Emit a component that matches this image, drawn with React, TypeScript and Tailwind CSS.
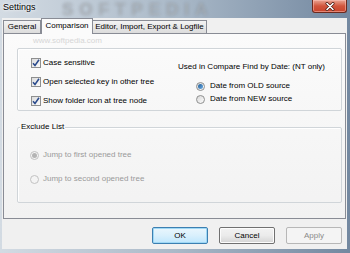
import React from 'react';

const Check = () => (
  <span className="w-[10px] h-[10px] border border-[#8e8f8f] bg-gradient-to-br from-[#dcdcdc] to-[#fbfbfb] flex items-center justify-center shrink-0">
    <svg width="8" height="8" viewBox="0 0 8 8">
      <path d="M1 4.2 L3 6.5 L7 0.8" fill="none" stroke="#2a4a8c" strokeWidth="1.5" />
    </svg>
  </span>
);

const Radio = ({ on, disabled }: { on?: boolean; disabled?: boolean }) => (
  <span
    className={
      'w-[9px] h-[9px] rounded-full border flex items-center justify-center shrink-0 ' +
      (disabled
        ? 'border-[#c2c2c2] bg-[#f4f4f4]'
        : 'border-[#8e8f8f] bg-gradient-to-br from-[#d8d8d8] to-[#fdfdfd]')
    }
  >
    {on && (
      <span
        className={
          'w-[5px] h-[5px] rounded-full ' +
          (disabled ? 'bg-[#b4b4b4]' : 'bg-gradient-to-br from-[#1d5a92] to-[#6fb0e8]')
        }
      />
    )}
  </span>
);

const Button = ({ label, kind }: { label: string; kind: 'default' | 'normal' | 'disabled' }) => {
  const cls =
    kind === 'default'
      ? 'border-[#3c7fb1] bg-gradient-to-b from-[#eaf6fd] via-[#d9f0fc] to-[#bee6fd] text-black shadow-[inset_0_0_0_1px_#9fd8f5]'
      : kind === 'normal'
      ? 'border-[#707070] bg-gradient-to-b from-[#f2f2f2] via-[#ebebeb] to-[#d4d4d4] text-black shadow-[inset_0_0_0_1px_#fcfcfc]'
      : 'border-[#b7b7b7] bg-[#f4f4f4] text-[#8a8a8a]';
  return (
    <div className={'w-[56px] h-[17px] rounded-[2px] border flex items-center justify-center text-[8px] ' + cls}>
      {label}
    </div>
  );
};

export default function App() {
  return (
    <div className="w-[350px] h-[253px] relative overflow-hidden flex flex-col bg-gradient-to-r from-[#d3dbe3] via-[#aab9c8] to-[#7388a0] font-['Liberation_Sans',Arial,sans-serif] leading-none select-none">
      {/* title bar */}
      <div className="h-[18px] flex items-start justify-between shrink-0">
        <span className="pl-[3px] pt-[3px] text-[9px] text-black [text-shadow:0_0_4px_#fff,0_0_2px_#fff]">Settings</span>
        <div className="mr-[3px] w-[35px] h-[13px] rounded-b-[3px] border border-t-0 border-[#6e2a1e] bg-gradient-to-b from-[#e9a493] via-[#d1553c] to-[#c8432b] flex items-center justify-center shadow-[inset_0_0_0_1px_rgba(255,200,190,0.5)]">
          <svg width="10" height="9" viewBox="0 0 10 9">
            <path d="M2 1.5 L8 7.5 M8 1.5 L2 7.5" stroke="#4a1a12" strokeWidth="3" strokeLinecap="round" />
            <path d="M2 1.5 L8 7.5 M8 1.5 L2 7.5" stroke="#ffffff" strokeWidth="1.6" strokeLinecap="round" />
          </svg>
        </div>
      </div>
      <span className="absolute left-[62px] top-[1px] text-[17px] font-bold tracking-[6px] text-white/30 blur-[1.2px] [text-shadow:0_0_2px_rgba(60,70,80,0.5)] pointer-events-none">
        SOFTPEDIA
      </span>

      {/* client area */}
      <div className="flex-1 ml-[2px] mr-[3px] mb-[4px] bg-[#f0f0f0] flex flex-col text-black">
        {/* tabs */}
        <div className="ml-[1px] h-[15px] flex items-end shrink-0">
          <div className="h-[13px] w-[38px] border border-b-0 border-[#898c95] bg-gradient-to-b from-[#f3f3f3] to-[#dcdcdc] flex items-center justify-center text-[8px]">
            General
          </div>
          <div className="relative z-10 -mb-px h-[16px] w-[52px] border border-b-0 border-[#898c95] bg-[#fbfbfb] flex items-start pt-[3px] justify-center text-[8px]">
            Comparison
          </div>
          <div className="h-[13px] w-[114px] border border-b-0 border-l-0 border-[#898c95] bg-gradient-to-b from-[#f3f3f3] to-[#dcdcdc] flex items-center justify-center text-[8px]">
            Editor, Import, Export &amp; Logfile
          </div>
        </div>

        {/* panel */}
        <div className="relative mx-[1px] h-[186px] shrink-0 border border-[#898c95] bg-gradient-to-b from-[#fbfbfb] to-[#f2f2f2] flex flex-col">
          <span className="absolute left-[29px] top-[3px] text-[8px] text-[#d6d6d6] pointer-events-none">www.softpedia.com</span>

          {/* group 1 */}
          <div className="mt-[14px] ml-[13px] mr-[3px] h-[63px] border border-[#d0d5d9] rounded-[2px] shadow-[inset_1px_1px_0_#fff] flex text-[8px]">
            <div className="w-[160px] pl-[13px] pt-[9px] flex flex-col gap-[9px]">
              <div className="h-[10px] flex items-center gap-[2px]"><Check /><span>Case sensitive</span></div>
              <div className="h-[10px] flex items-center gap-[2px]"><Check /><span>Open selected key in other tree</span></div>
              <div className="h-[10px] flex items-center gap-[2px]"><Check /><span>Show folder icon at tree node</span></div>
            </div>
            <div className="flex-1 pt-[13px] flex flex-col">
              <div className="h-[10px] flex items-center">Used in Compare Find by Date: (NT only)</div>
              <div className="mt-[9px] pl-[18px] flex flex-col gap-[3px]">
                <div className="h-[10px] flex items-center gap-[5px]"><Radio on /><span>Date from OLD source</span></div>
                <div className="h-[10px] flex items-center gap-[5px]"><Radio /><span>Date from NEW source</span></div>
              </div>
            </div>
          </div>

          {/* group 2 */}
          <div className="relative mt-[16px] ml-[13px] mr-[3px] h-[76px] border border-[#d0d5d9] rounded-[2px] shadow-[inset_1px_1px_0_#fff] text-[8px] flex flex-col pl-[12px] pt-[22px] gap-[14px]">
            <span className="absolute left-[2px] -top-[5px] px-[1px] bg-[#f8f8f8] text-black">Exclude List</span>
            <div className="h-[10px] flex items-center gap-[4px] text-[#9a9a9a]"><Radio on disabled /><span>Jump to first opened tree</span></div>
            <div className="h-[10px] flex items-center gap-[4px] text-[#9a9a9a]"><Radio disabled /><span>Jump to second opened tree</span></div>
          </div>
        </div>

        {/* buttons */}
        <div className="flex-1 flex justify-end items-start pt-[8px] pr-[5px] gap-[11px]">
          <Button label="OK" kind="default" />
          <Button label="Cancel" kind="normal" />
          <Button label="Apply" kind="disabled" />
        </div>
      </div>
    </div>
  );
}
